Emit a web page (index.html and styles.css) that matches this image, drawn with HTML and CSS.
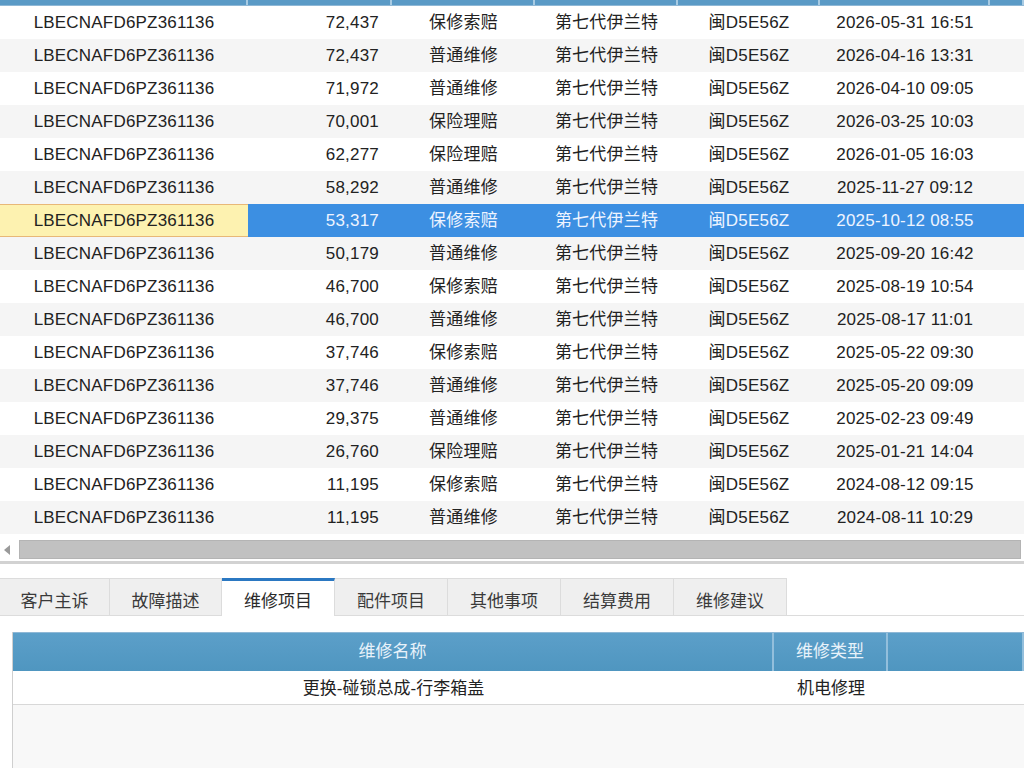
FILE: index.html
```html
<html>
  <head>
    <title>维修记录</title>
    <meta name="viewport" content="width=device-width, initial-scale=1.0">
    <link rel="stylesheet" href="styles.css">
  </head>
  <body>
    <div class="grid">
      <div class="grid__head">
        <span></span><span></span><span></span><span></span><span></span><span></span><span></span>
      </div>

      <div class="row">
        <span>LBECNAFD6PZ361136</span><span class="num">72,437</span><span>保修索赔</span><span>第七代伊兰特</span><span>闽D5E56Z</span><span>2026-05-31 16:51</span><span></span>
      </div>
      <div class="row">
        <span>LBECNAFD6PZ361136</span><span class="num">72,437</span><span>普通维修</span><span>第七代伊兰特</span><span>闽D5E56Z</span><span>2026-04-16 13:31</span><span></span>
      </div>
      <div class="row">
        <span>LBECNAFD6PZ361136</span><span class="num">71,972</span><span>普通维修</span><span>第七代伊兰特</span><span>闽D5E56Z</span><span>2026-04-10 09:05</span><span></span>
      </div>
      <div class="row">
        <span>LBECNAFD6PZ361136</span><span class="num">70,001</span><span>保险理赔</span><span>第七代伊兰特</span><span>闽D5E56Z</span><span>2026-03-25 10:03</span><span></span>
      </div>
      <div class="row">
        <span>LBECNAFD6PZ361136</span><span class="num">62,277</span><span>保险理赔</span><span>第七代伊兰特</span><span>闽D5E56Z</span><span>2026-01-05 16:03</span><span></span>
      </div>
      <div class="row">
        <span>LBECNAFD6PZ361136</span><span class="num">58,292</span><span>普通维修</span><span>第七代伊兰特</span><span>闽D5E56Z</span><span>2025-11-27 09:12</span><span></span>
      </div>
      <div class="row row--selected">
        <span class="focus">LBECNAFD6PZ361136</span><span class="num">53,317</span><span>保修索赔</span><span>第七代伊兰特</span><span>闽D5E56Z</span><span>2025-10-12 08:55</span><span></span>
      </div>
      <div class="row">
        <span>LBECNAFD6PZ361136</span><span class="num">50,179</span><span>普通维修</span><span>第七代伊兰特</span><span>闽D5E56Z</span><span>2025-09-20 16:42</span><span></span>
      </div>
      <div class="row">
        <span>LBECNAFD6PZ361136</span><span class="num">46,700</span><span>保修索赔</span><span>第七代伊兰特</span><span>闽D5E56Z</span><span>2025-08-19 10:54</span><span></span>
      </div>
      <div class="row">
        <span>LBECNAFD6PZ361136</span><span class="num">46,700</span><span>普通维修</span><span>第七代伊兰特</span><span>闽D5E56Z</span><span>2025-08-17 11:01</span><span></span>
      </div>
      <div class="row">
        <span>LBECNAFD6PZ361136</span><span class="num">37,746</span><span>保修索赔</span><span>第七代伊兰特</span><span>闽D5E56Z</span><span>2025-05-22 09:30</span><span></span>
      </div>
      <div class="row">
        <span>LBECNAFD6PZ361136</span><span class="num">37,746</span><span>普通维修</span><span>第七代伊兰特</span><span>闽D5E56Z</span><span>2025-05-20 09:09</span><span></span>
      </div>
      <div class="row">
        <span>LBECNAFD6PZ361136</span><span class="num">29,375</span><span>普通维修</span><span>第七代伊兰特</span><span>闽D5E56Z</span><span>2025-02-23 09:49</span><span></span>
      </div>
      <div class="row">
        <span>LBECNAFD6PZ361136</span><span class="num">26,760</span><span>保险理赔</span><span>第七代伊兰特</span><span>闽D5E56Z</span><span>2025-01-21 14:04</span><span></span>
      </div>
      <div class="row">
        <span>LBECNAFD6PZ361136</span><span class="num">11,195</span><span>保修索赔</span><span>第七代伊兰特</span><span>闽D5E56Z</span><span>2024-08-12 09:15</span><span></span>
      </div>
      <div class="row">
        <span>LBECNAFD6PZ361136</span><span class="num">11,195</span><span>普通维修</span><span>第七代伊兰特</span><span>闽D5E56Z</span><span>2024-08-11 10:29</span><span></span>
      </div>
    </div>

    <div class="hscroll">
      <div class="hscroll__bar">
        <span class="hscroll__arrow"></span>
        <span class="hscroll__thumb"></span>
      </div>
    </div>

    <div class="tabs">
      <div class="tab">客户主诉</div>
      <div class="tab">故障描述</div>
      <div class="tab tab--active">维修项目</div>
      <div class="tab">配件项目</div>
      <div class="tab">其他事项</div>
      <div class="tab">结算费用</div>
      <div class="tab">维修建议</div>
      <div class="tabs__rest"></div>
    </div>

    <div class="panel">
      <div class="items">
        <div class="items__head">
          <span>维修名称</span><span>维修类型</span><span></span>
        </div>
        <div class="items__row">
          <span>更换-碰锁总成-行李箱盖</span><span>机电修理</span><span></span>
        </div>
        <div class="items__empty"></div>
      </div>
    </div>
  </body>
</html>
```

FILE: styles.css
```css
body {
  margin: 0;
  width: 1024px;
  height: 768px;
  overflow: hidden;
  background: #ffffff;
  color: #222222;
  font-family: "Liberation Sans", Arial, "Noto Sans CJK SC", sans-serif;
  font-size: 17px;
}

.grid__head,
.row {
  display: grid;
  grid-template-columns: 248px 144px 143px 143px 142px 170px 34px;
}

.grid__head {
  height: 5px;
  background: #5a9ac6;
  border-bottom: 1px solid #8fb8d6;
}
.grid__head span {
  border-right: 2px solid #a8cbe3;
}

.row {
  height: 33px;
  line-height: 33px;
  background: #ffffff;
}
.row:nth-of-type(odd) {
  background: #f5f5f5;
}
.row span {
  text-align: center;
  white-space: nowrap;
  overflow: hidden;
  letter-spacing: 0.2px;
}
.row .num {
  text-align: right;
  padding-right: 13px;
}

.row--selected,
.row--selected:nth-of-type(odd) {
  background: #3c8fe2;
  color: #eef4ff;
}
.row--selected .focus {
  background: #fdf2b0;
  color: #222222;
  border-top: 1px solid #e8b878;
  border-bottom: 1px solid #e8b878;
  line-height: 31px;
}

.hscroll {
  height: 44px;
  padding-top: 6px;
  box-sizing: border-box;
}
.hscroll__bar {
  display: flex;
  align-items: center;
  height: 19px;
  border-bottom: 3px solid #d2d2d2;
  padding-bottom: 2px;
}
.hscroll__arrow {
  width: 0;
  height: 0;
  margin: 0 9px 0 4px;
  border-top: 5px solid transparent;
  border-bottom: 5px solid transparent;
  border-right: 6px solid #9a9a9a;
}
.hscroll__thumb {
  flex: 1;
  height: 17px;
  background: #c1c1c1;
  border: 1px solid #b4b4b4;
  margin-right: 3px;
}

.tabs {
  display: flex;
  height: 38px;
}
.tab {
  width: 113px;
  box-sizing: border-box;
  text-align: center;
  line-height: 46px;
  color: #3a3a3a;
  background: #efefef;
  border: 1px solid #dcdcdc;
  border-left: none;
}
.tab:first-child {
  width: 110px;
}
.tab:nth-child(2) {
  width: 112px;
}
.tab--active {
  background: #ffffff;
  border-top: 3px solid #2b78c2;
  border-bottom: none;
  line-height: 42px;
  color: #2a2a2a;
}
.tabs__rest {
  flex: 1;
  border-bottom: 1px solid #dcdcdc;
}

.panel {
  padding: 16px 0 0 12px;
}
.items {
  border-left: 1px solid #cfcfcf;
  background: #f8f8f8;
  height: 140px;
}
.items__head,
.items__row {
  display: grid;
  grid-template-columns: 761px 114px 1fr;
  text-align: center;
}
.items__head {
  height: 38px;
  line-height: 38px;
  background: linear-gradient(#5c9fc9, #4f96c0);
  color: #e8f2fa;
  border-top: 1px solid #8fb8d6;
}
.items__head span {
  border-right: 2px solid #93bfdc;
}
.items__row {
  height: 33px;
  line-height: 35px;
  background: #ffffff;
  border-bottom: 1px solid #d8d8d8;
}
```
